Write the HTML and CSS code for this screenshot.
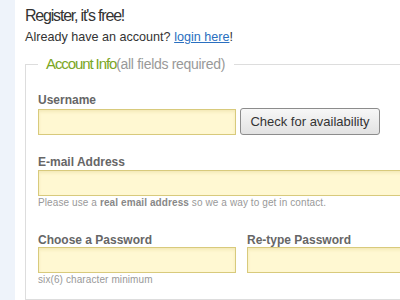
FILE: index.html
```html
<!DOCTYPE html>
<html lang="en">
<head>
    <meta charset="UTF-8">
    <meta name="viewport" content="width=device-width, initial-scale=1.0">
    <title>Register</title>
    <link rel="stylesheet" href="styles.css">
</head>
<body>

    <div class="page">
        <h1>Register, it's free!</h1>
        <p class="intro">Already have an account? <a href="#">login here</a>!</p>

        <form class="signup">
            <fieldset>
                <legend><span class="legend-title">Account Info</span><span class="legend-note">(all fields required)</span></legend>

                <!-- Username -->
                <div class="field">
                    <label for="username">Username</label>
                    <div class="inline">
                        <input type="text" id="username" class="short">
                        <button type="button">Check for availability</button>
                    </div>
                </div>

                <!-- Email -->
                <div class="field">
                    <label for="email">E-mail Address</label>
                    <input type="text" id="email" class="wide">
                    <div class="hint">Please use a <b>real email address</b> so we a way to get in contact.</div>
                </div>

                <!-- Passwords -->
                <div class="field pair">
                    <div class="col">
                        <label for="password">Choose a Password</label>
                        <input type="password" id="password" class="short">
                        <div class="hint">six(6) character minimum</div>
                    </div>
                    <div class="col">
                        <label for="password2">Re-type Password</label>
                        <input type="password" id="password2" class="short">
                    </div>
                </div>
            </fieldset>
        </form>
    </div>

</body>
</html>
```

FILE: styles.css
```css
html, body {
    margin: 0;
    height: 100%;
    overflow: hidden;
}

body {
    font-family: "Liberation Sans", Arial, sans-serif;
    background-color: #eef3fa;
    color: #333;
}

.page {
    margin-left: 15px;
    background-color: #fff;
    min-height: 100%;
    padding: 6px 0 0 10px;
    width: 600px;
}

h1 {
    font-size: 16px;
    line-height: 20px;
    font-weight: normal;
    letter-spacing: -1.2px;
    margin: 0;
    color: #333;
}

.intro {
    font-size: 12.6px;
    line-height: 16px;
    margin: 3px 0 0 0;
    color: #333;
}

.intro a {
    color: #2a6fc0;
}

fieldset {
    width: 420px;
    margin: 10px 0 0 0;
    padding: 0 12px 13px 12px;
    border: 1px solid #ddd;
    min-width: 0;
}

legend {
    padding: 0 9px 0 8px;
    font-size: 15px;
    line-height: 17px;
}

.legend-title {
    color: #7aa624;
    letter-spacing: -1.1px;
}

.legend-note {
    color: #999;
    font-size: 14px;
    letter-spacing: -0.3px;
}

.field {
    margin-top: 20px;
}

label {
    display: block;
    font-size: 12px;
    line-height: 14px;
    font-weight: bold;
    color: #666;
    margin-bottom: 1px;
}

.inline {
    display: flex;
    align-items: center;
    gap: 4px;
}

input {
    box-sizing: border-box;
    height: 26px;
    margin: 0;
    background-color: #fff8d2;
    border: 1px solid #d8ca7c;
    box-shadow: inset 0 2px 3px rgba(210, 190, 110, 0.25);
    font-family: inherit;
    font-size: 13px;
    padding: 0 4px;
}

input.short {
    width: 198px;
}

input.wide {
    width: 400px;
}

button {
    box-sizing: border-box;
    height: 27px;
    width: 140px;
    padding: 0;
    font-family: inherit;
    font-size: 13px;
    color: #333;
    background: linear-gradient(#f7f7f7, #e2e2e2);
    border: 1px solid #8c8c8c;
    border-radius: 3px;
}

.hint {
    font-size: 10px;
    line-height: 12px;
    color: #999;
    margin-top: 1px;
    letter-spacing: 0.1px;
}

.hint b {
    color: #888;
}

.pair {
    display: flex;
    gap: 11px;
    margin-top: 24px;
}

.col label {
    margin-bottom: 0;
}
```
